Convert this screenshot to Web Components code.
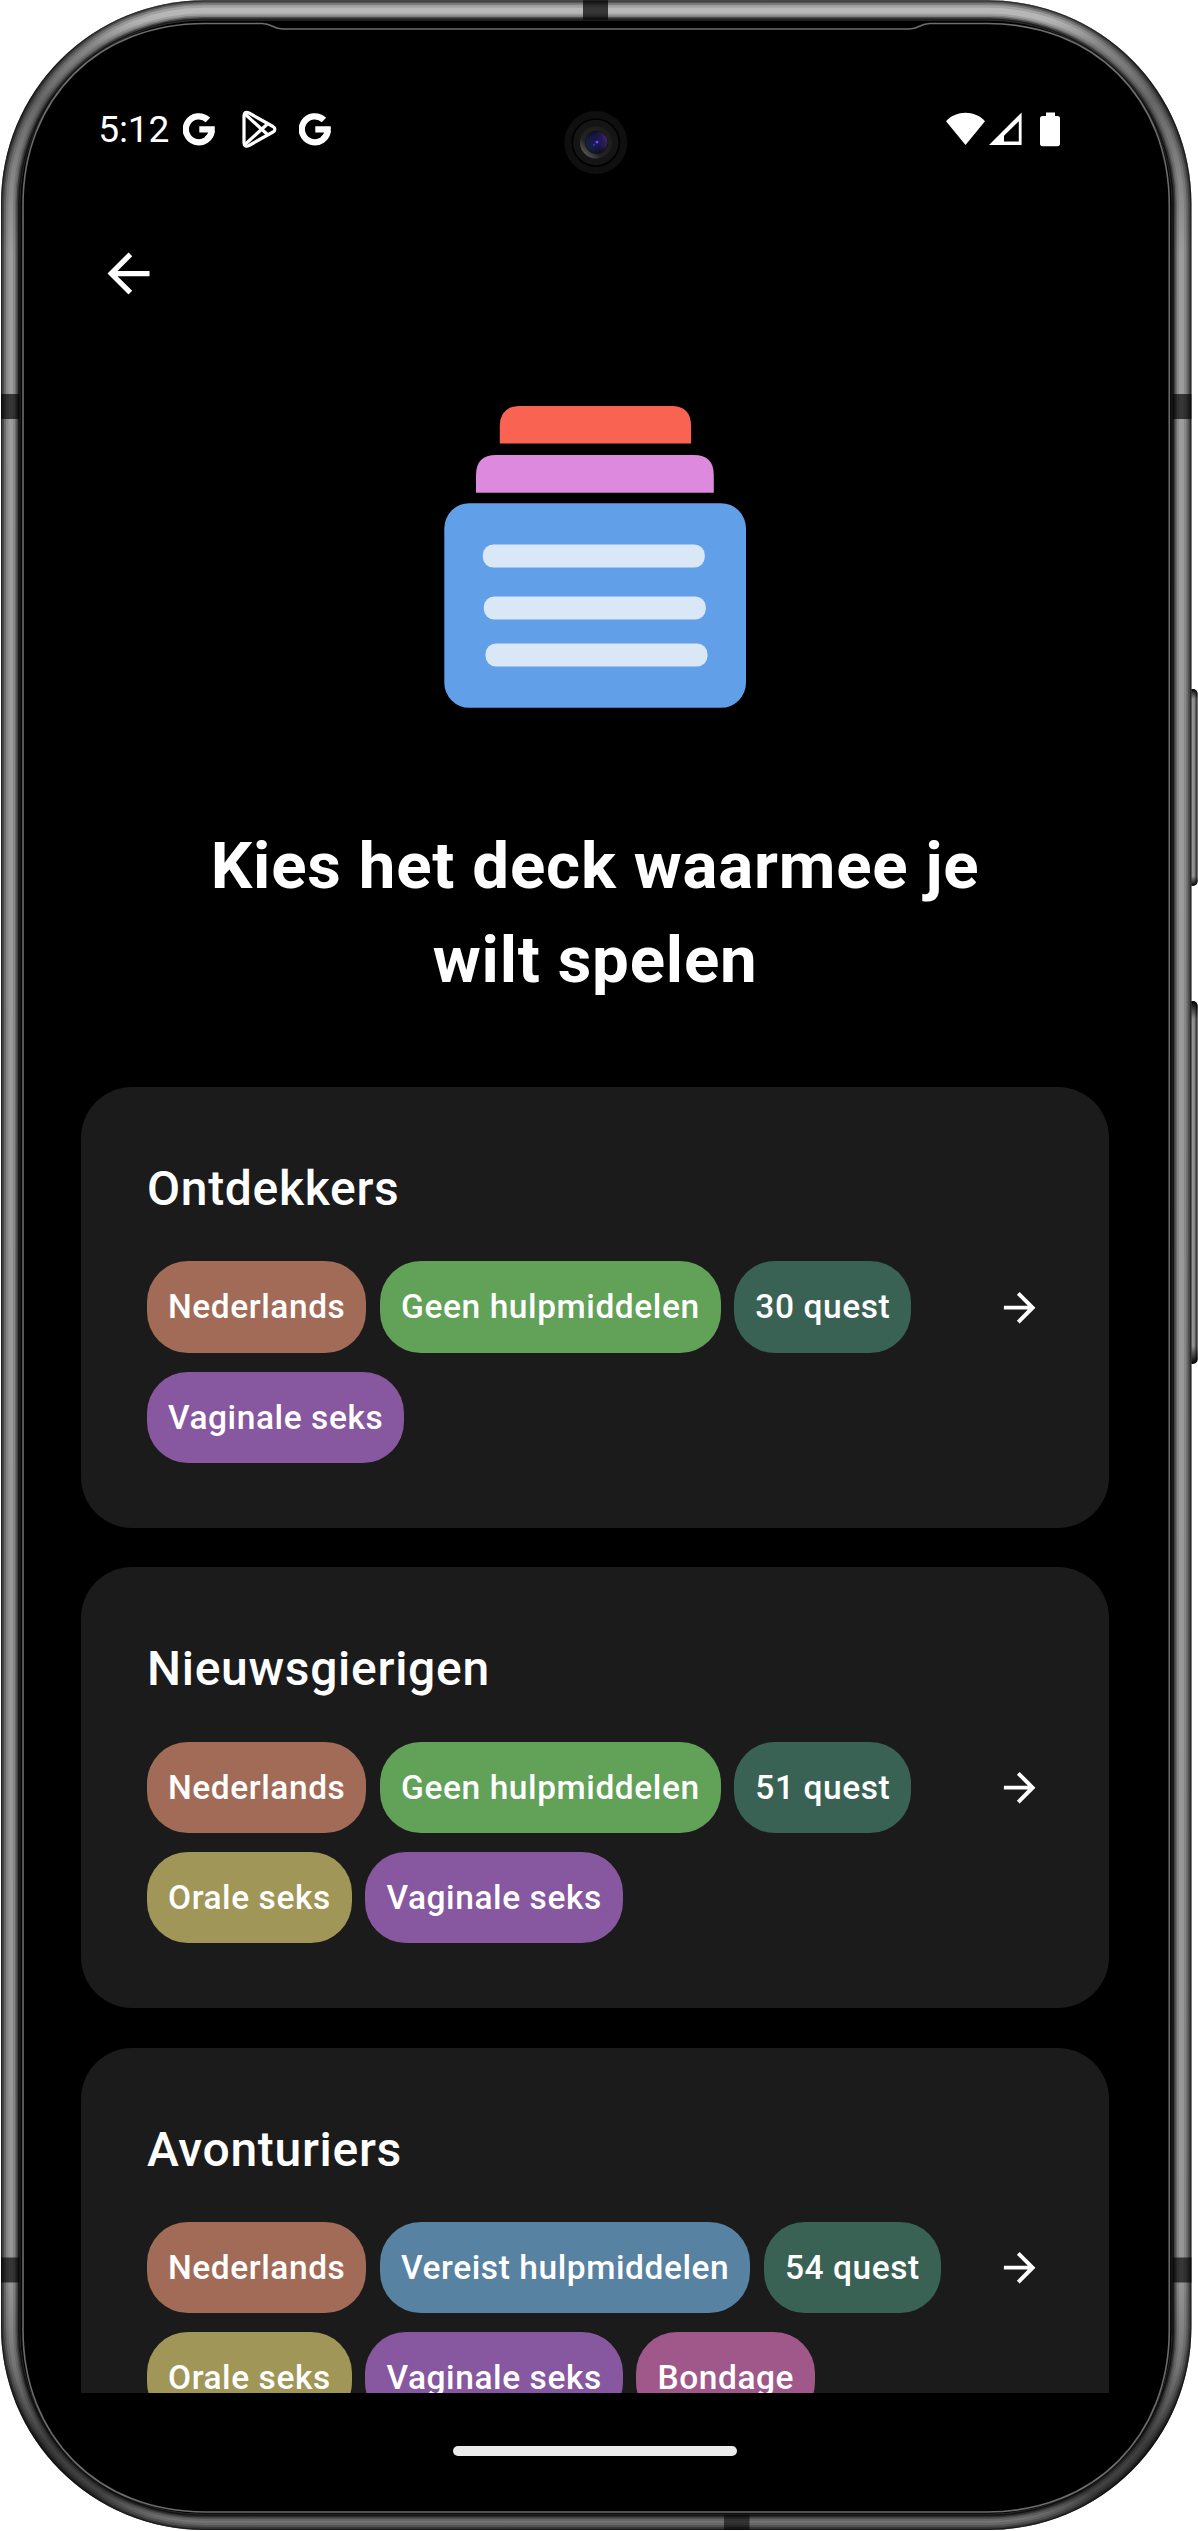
<!DOCTYPE html>
<html lang="nl">
<head>
<meta charset="utf-8">
<title>Kies het deck</title>
<style>
html, body { margin: 0; background: #fff; }
body { font-family: Roboto, "Liberation Sans", sans-serif; color: #fff; }
</style>
</head>
<body>
<phone-shell>
  <status-bar></status-bar>
  <app-bar></app-bar>
  <deck-art></deck-art>
  <page-title>Kies het deck waarmee je wilt spelen</page-title>
  <deck-list>
    <deck-card name="Ontdekkers">
      <deck-chip tone="clay">Nederlands</deck-chip>
      <deck-chip tone="green">Geen hulpmiddelen</deck-chip>
      <deck-chip tone="teal">30 quest</deck-chip>
      <deck-chip tone="purple">Vaginale seks</deck-chip>
    </deck-card>
    <deck-card name="Nieuwsgierigen">
      <deck-chip tone="clay">Nederlands</deck-chip>
      <deck-chip tone="green">Geen hulpmiddelen</deck-chip>
      <deck-chip tone="teal">51 quest</deck-chip>
      <deck-chip tone="olive">Orale seks</deck-chip>
      <deck-chip tone="purple">Vaginale seks</deck-chip>
    </deck-card>
    <deck-card name="Avonturiers">
      <deck-chip tone="clay">Nederlands</deck-chip>
      <deck-chip tone="blue">Vereist hulpmiddelen</deck-chip>
      <deck-chip tone="teal">54 quest</deck-chip>
      <deck-chip tone="olive">Orale seks</deck-chip>
      <deck-chip tone="purple">Vaginale seks</deck-chip>
      <deck-chip tone="pink">Bondage</deck-chip>
    </deck-card>
  </deck-list>
  <home-bar></home-bar>
</phone-shell>
<script>
const define = (name, html, setup) => customElements.define(name, class extends HTMLElement {
  constructor() {
    super();
    this.attachShadow({ mode: 'open' }).innerHTML = html;
  }
  connectedCallback() { if (setup) setup(this, this.shadowRoot); }
});

define('phone-frame', `
<style>:host{display:block;width:1198px;height:2531px} svg{display:block}</style>
<svg width="1198" height="2531" viewBox="0 0 1198 2531" fill="none">
  <defs>
    <linearGradient id="metal" gradientUnits="userSpaceOnUse" x1="0" y1="0" x2="0" y2="2531">
      <stop offset="0" stop-color="#bcbcbc"/><stop offset=".008" stop-color="#b4b4b4"/>
      <stop offset=".018" stop-color="#858585"/><stop offset=".04" stop-color="#666"/>
      <stop offset=".07" stop-color="#868686"/><stop offset=".1" stop-color="#9c9c9c"/>
      <stop offset=".9" stop-color="#969696"/>
      <stop offset=".935" stop-color="#747474"/><stop offset=".965" stop-color="#3e3e3e"/>
      <stop offset=".985" stop-color="#444"/><stop offset=".995" stop-color="#747474"/><stop offset="1" stop-color="#7c7c7c"/>
    </linearGradient>
    <linearGradient id="key" x1="0" x2="1" y1="0" y2="0">
      <stop offset="0" stop-color="#333"/><stop offset=".3" stop-color="#999"/><stop offset=".65" stop-color="#8c8c8c"/><stop offset="1" stop-color="#111"/>
    </linearGradient>
    <linearGradient id="keyEnds" x1="0" x2="0" y1="0" y2="1">
      <stop offset="0" stop-color="#000"/><stop offset=".05" stop-color="#000" stop-opacity="0"/>
      <stop offset=".95" stop-color="#000" stop-opacity="0"/><stop offset="1" stop-color="#000"/>
    </linearGradient>
    <clipPath id="body"><rect x="1" y=".3" width="1190.4" height="2529.7" rx="203"/></clipPath>
    <radialGradient id="lens"><stop offset="0" stop-color="#4a36b4"/><stop offset=".2" stop-color="#1c1458"/><stop offset=".6" stop-color="#121838"/><stop offset="1" stop-color="#0a0a14"/></radialGradient>
    <linearGradient id="rim" x1="0" y1="1" x2="1" y2="0"><stop offset="0" stop-color="#777"/><stop offset=".35" stop-color="#222"/><stop offset="1" stop-color="#1c1c1c"/></linearGradient>
    <linearGradient id="tint" x1="0" y1=".6" x2="1" y2=".3"><stop offset="0" stop-color="#123c4c" stop-opacity=".6"/><stop offset=".5" stop-color="#20145c" stop-opacity=".1"/><stop offset="1" stop-color="#5e3290" stop-opacity=".75"/></linearGradient>
  </defs>
  <g>
    <rect x="1188" y="689" width="9.6" height="197" rx="5" fill="url(#key)"/>
    <rect x="1188" y="689" width="9.6" height="197" rx="5" fill="url(#keyEnds)"/>
    <rect x="1188" y="1001" width="9.6" height="363" rx="5" fill="url(#key)"/>
    <rect x="1188" y="1001" width="9.6" height="363" rx="5" fill="url(#keyEnds)"/>
  </g>
  <g clip-path="url(#body)">
    <rect width="1198" height="2531" fill="url(#metal)"/>
    <g fill="#363636">
      <rect x="0" y="394" width="22" height="25"/><rect x="1170" y="394" width="22" height="25"/>
      <rect x="0" y="2257.500" width="22" height="25"/><rect x="1170" y="2257.500" width="22" height="25"/>
      <rect x="583" y="0" width="25" height="22"/><rect x="724" y="2510" width="25.500" height="21"/>
    </g>
    <g stroke="#000">
      <rect x="1" y=".3" width="1190.400" height="2529.700" rx="203" stroke-width="2.500" stroke-opacity=".5"/>
      <rect x="1" y=".3" width="1190.400" height="2529.700" rx="203" stroke-width="6" stroke-opacity=".32"/>
      <rect x="1" y=".3" width="1190.400" height="2529.700" rx="203" stroke-width="10" stroke-opacity=".22"/>
      <rect x="1" y=".3" width="1190.400" height="2529.700" rx="203" stroke-width="15" stroke-opacity=".12"/>
      <rect x="20" y="20.500" width="1152" height="2493.500" rx="183" stroke-width="14" stroke-opacity=".12"/>
      <rect x="20" y="20.500" width="1152" height="2493.500" rx="183" stroke-width="10" stroke-opacity=".2"/>
      <rect x="20" y="20.500" width="1152" height="2493.500" rx="183" stroke-width="7" stroke-opacity=".4"/>
      <rect x="20" y="20.500" width="1152" height="2493.500" rx="183" stroke-width="4" stroke-opacity=".6"/>
    </g>
    <rect x="19.500" y="20.500" width="1153" height="2493.500" rx="183" fill="#000"/>
    <rect x="20" y="20.200" width="1152" height="2494" rx="183" stroke="#303030" stroke-width=".8"/>
  </g>
  <path d="M23 205C23 98 98 23.500 205 23.500H262C273 23.500 272 29 283 29H909C920 29 919 23.500 930 23.500H987C1094 23.500 1169.300 98 1169.300 205V2330C1169.300 2437 1094 2512 987 2512H205C98 2512 23 2437 23 2330Z" fill="#000" stroke="#6c6c6c" stroke-width="1.600"/>
  <circle cx="595.800" cy="142.500" r="31.500" fill="#0f0f0f"/>
  <circle cx="595.800" cy="142.500" r="23.500" fill="#151515" stroke="#000" stroke-width="1.600"/>
  <circle cx="596" cy="142.500" r="16" fill="url(#rim)"/>
  <circle cx="596.500" cy="142.300" r="11.500" fill="url(#lens)"/>
  <circle cx="596.500" cy="142.300" r="11" fill="url(#tint)"/>
  <circle cx="597.200" cy="142" r="1.200" fill="#6c50ff"/><circle cx="594" cy="145" r="1" fill="#4232b4"/>
</svg>`);

define('phone-shell', `
<style>
:host{display:grid;width:1198px;height:2531px;overflow:hidden}
phone-frame,.screen{grid-area:1/1}
.screen{display:flex;flex-direction:column;padding:95px 89.200px 0 81.400px;height:2531px;box-sizing:border-box;z-index:1}
</style>
<phone-frame></phone-frame>
<div class="screen"><slot></slot></div>`);

const G_MARK = `<svg width="32" height="34" viewBox="0 0 32 34" fill="none"><path d="M24.900 8A13 13 0 1 0 28.800 18.200" stroke="#fff" stroke-width="6.300"/><path d="M16.300 14.200H31.700C32.300 21 30 26 26 29L22 24.500C24 23 25 21.800 25.300 20.500H16.300Z" fill="#fff"/></svg>`;

define('status-bar', `
<style>
:host{display:flex;height:68px;flex:none;align-items:center;justify-content:space-between;padding:0 48.500px 0 16.800px}
div{display:flex;align-items:center}
.time{font-size:37.200px;line-height:44px;width:84.800px;white-space:nowrap;letter-spacing:-.2px}
svg{display:block}
.play{margin:0 22px 0 26.700px}
.signal{margin:0 18.500px 0 3.500px}
</style>
<div>
  <span class="time">5:12</span>
  ${G_MARK}
  <svg class="play" width="35" height="38" viewBox="0 0 35 38" fill="none" stroke="#fff" stroke-width="3.200" stroke-linejoin="round">
    <path d="M2 5.500C2 2.500 4.500 1.500 7 3L31 16.500C33.500 18 33.500 20.500 31 22L7 35.500C4.500 37 2 36 2 33Z"/>
    <path d="M3 4L26 25M3 34.500L26 13.500"/>
  </svg>
  ${G_MARK}
</div>
<div>
  <svg width="39" height="34" viewBox="0 0 39 34" fill="#fff"><path d="M0 9.200C10-2.200 29-2.200 39 9.200L19.500 33Z"/></svg>
  <svg class="signal" width="33" height="34" viewBox="0 0 33 34" fill="#fff" fill-rule="evenodd"><path d="M32.600 .5V33H0ZM29.800 9.300L15 23.700V29.600H29.800Z"/></svg>
  <svg width="20" height="35" viewBox="0 0 20 35" fill="#fff"><path d="M6 .5H15V4H17.500Q20 4 20 6.500V31.500Q20 34.300 17.500 34.300H2.500Q0 34.300 0 31.500V6.500Q0 4 2.500 4H6Z"/></svg>
</div>`);

define('app-bar', `
<style>:host{display:flex;height:221px;flex:none;align-items:center;padding:0 0 0 15.200px;box-sizing:border-box} svg{display:block}</style>
<svg width="63" height="63" viewBox="0 0 24 24" fill="#fff"><path d="M20 11H7.830l5.590-5.590L12 4l-8 8 8 8 1.410-1.410L7.830 13H20v-2z"/></svg>`);

define('deck-art', `
<style>:host{display:flex;justify-content:center;height:302px;flex:none;margin-top:22px} svg{display:block}</style>
<svg width="302" height="302" viewBox="444.200 406 302 302">
  <path fill="#f96352" d="M500 443.500V426Q500 406 520 406H671.300Q691.300 406 691.300 426V443.500Z"/>
  <path fill="#dc89de" d="M476.200 492.700V475Q476.200 455 496.200 455H694Q714 455 714 475V492.700Z"/>
  <rect fill="#629fe9" x="444.500" y="503.200" width="301.700" height="204.600" rx="25"/>
  <g fill="#dae7f6">
    <rect x="483" y="544.500" width="222" height="23" rx="10.500"/>
    <rect x="484" y="596.500" width="222" height="23" rx="10.500"/>
    <rect x="485.700" y="643.500" width="222" height="23" rx="10.500"/>
  </g>
</svg>`);

define('page-title', `
<style>:host{display:block;flex:none;margin:111px 100px 0;font-size:65.400px;font-weight:700;letter-spacing:.8px;line-height:94px;text-align:center}</style>
<slot></slot>`);

define('deck-list', `
<style>:host{display:flex;flex-direction:column;gap:39.300px;flex:none;margin-top:80px;height:1305.700px;overflow:hidden}</style>
<slot></slot>`);

define('deck-card', `
<style>
:host{display:grid;grid-template-columns:1fr 47.300px;box-sizing:border-box;flex:none;height:441px;background:#1b1b1b;border-radius:51px;padding:65px 66px 65px 65.600px}
h2{grid-column:1/-1;margin:0 0 36px;font-size:48px;font-weight:500;letter-spacing:.7px;line-height:73.600px;height:73px}
.chips{display:flex;flex-wrap:wrap;align-content:flex-start;gap:19px 13.700px}
.go{padding-top:22.500px}
svg{display:block}
</style>
<h2></h2>
<div class="chips"><slot></slot></div>
<div class="go"><svg width="47.300" height="47.300" viewBox="0 0 24 24" fill="#fff"><path d="M12 4l-1.410 1.410L16.170 11H4v2h12.170l-5.580 5.590L12 20l8-8z"/></svg></div>`,
(el, root) => { root.querySelector('h2').textContent = el.getAttribute('name'); });

const TONES = { clay: '#a26b57', green: '#62a158', teal: '#396255', purple: '#87589f', olive: '#a09657', blue: '#5882a1', pink: '#a0578a' };
define('deck-chip', `
<style>:host{display:block;height:91.300px;padding:0 21px;border-radius:41px;font-size:33.500px;font-weight:500;letter-spacing:.57px;line-height:91.300px;white-space:nowrap}</style>
<slot></slot>`,
el => { el.style.background = TONES[el.getAttribute('tone')]; });

define('home-bar', `
<style>:host{display:block;flex:none;width:284px;height:10px;border-radius:5px;background:#ebebeb;margin:53.300px auto 0}</style>`);
</script>
</body>
</html>
